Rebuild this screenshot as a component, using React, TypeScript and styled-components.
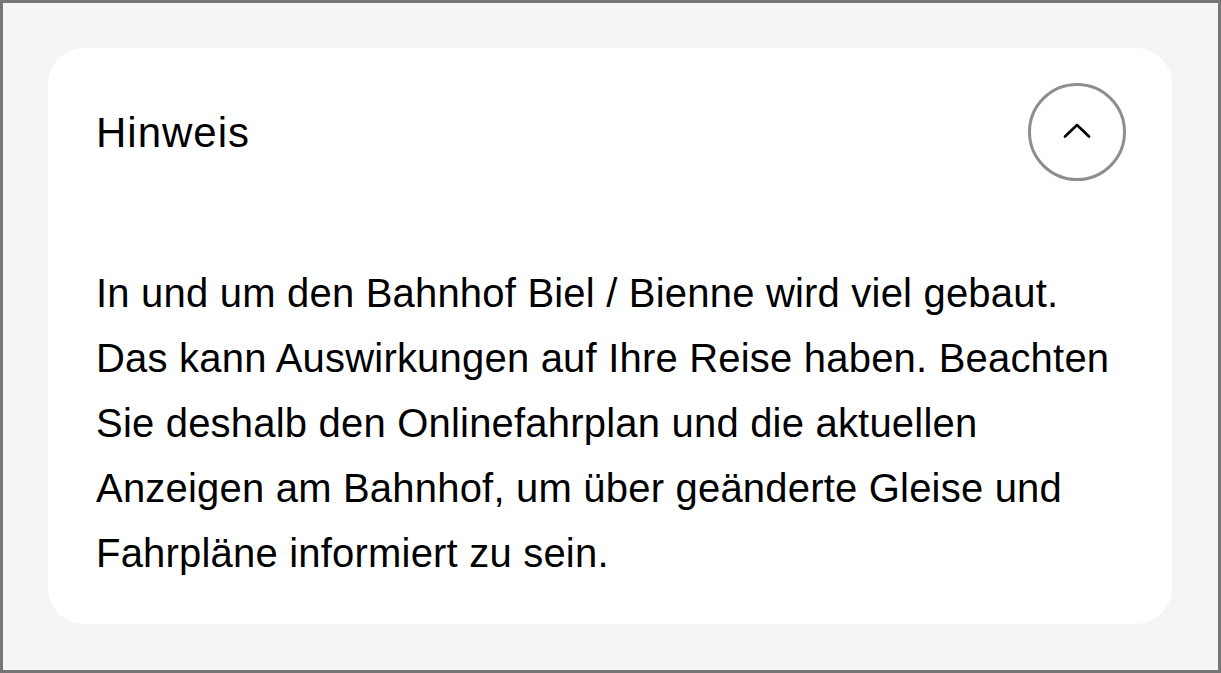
import styled, { createGlobalStyle } from "styled-components";

const GlobalStyle = createGlobalStyle`
  html, body {
    margin: 0;
    padding: 0;
    background: #f5f5f5;
  }
  * {
    box-sizing: border-box;
  }
`;

const NOTICE_TEXT =
  "In und um den Bahnhof Biel / Bienne wird viel gebaut. Das kann Auswirkungen auf Ihre Reise haben. Beachten Sie deshalb den Onlinefahrplan und die aktuellen Anzeigen am Bahnhof, um über geänderte Gleise und Fahrpläne informiert zu sein.";

const App = () => {
  return (
    <>
      <GlobalStyle />
      <Frame>
        <Card>
          <Header>
            <Title>Hinweis</Title>
            <ToggleButton aria-label="Hinweis schliessen">
              <svg width="28" height="16" viewBox="0 0 28 16" fill="none">
                <polyline
                  points="2,14.5 14,3 26,14.5"
                  stroke="#000"
                  strokeWidth="2.6"
                  strokeLinecap="round"
                  strokeLinejoin="round"
                />
              </svg>
            </ToggleButton>
          </Header>
          <Body>{NOTICE_TEXT}</Body>
        </Card>
      </Frame>
    </>
  );
};

export default App;

const Frame = styled.div`
  width: 1221px;
  height: 673px;
  border: 3px solid #767676;
  padding: 45px 46px 46px 45px;
  background: #f5f5f5;
`;

const Card = styled.section`
  background: #ffffff;
  border-radius: 36px;
  padding: 35px 46px 38px 48px;
  display: flex;
  flex-direction: column;
  gap: 80px;
  font-family: "Liberation Sans", Arial, sans-serif;
  color: #000;
`;

const Header = styled.div`
  display: flex;
  align-items: center;
  justify-content: space-between;
`;

const Title = styled.h2`
  margin: 0;
  padding-top: 2px;
  font-size: 42px;
  font-weight: 400;
  letter-spacing: 1px;
  line-height: 1;
`;

const ToggleButton = styled.button`
  width: 98px;
  height: 98px;
  border-radius: 50%;
  border: 3px solid #8e8e8e;
  background: #fff;
  display: flex;
  align-items: center;
  justify-content: center;
  padding: 0 0 4px;
  cursor: pointer;
`;

const Body = styled.p`
  margin: 0;
  font-size: 40px;
  line-height: 65px;
  letter-spacing: 0.2px;
`;
